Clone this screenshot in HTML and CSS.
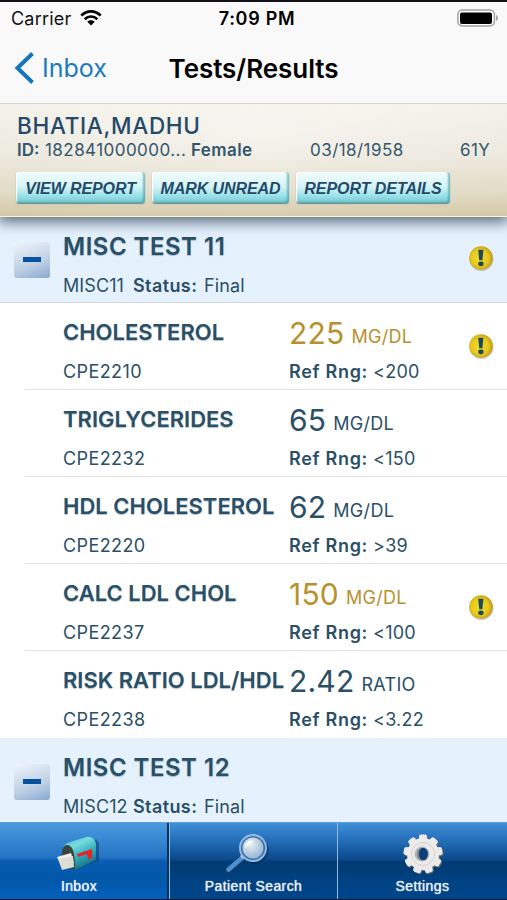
FILE: index.html
```html
<!DOCTYPE html>
<html lang="en">
<head>
    <meta charset="UTF-8">
    <meta name="viewport" content="width=device-width, initial-scale=1.0">
    <title>Tests/Results</title>
    <link rel="stylesheet" href="styles.css">
</head>
<body>
    <svg class="defs" width="0" height="0">
        <defs>
            <radialGradient id="gold" cx="45%" cy="50%" r="55%">
                <stop offset="0" stop-color="#f0dc2c"/>
                <stop offset="0.65" stop-color="#e8c81c"/>
                <stop offset="1" stop-color="#c39a18"/>
            </radialGradient>
            <symbol id="alert" viewBox="0 0 26 26">
                <circle cx="13.4" cy="14" r="12" fill="#8b8a80" opacity="0.45"/>
                <circle cx="13" cy="13" r="11.8" fill="url(#gold)"/>
                <path d="M10.2 4.8h5.2l-1 10.4h-3.2z" fill="#1b4a5c"/>
                <ellipse cx="12.9" cy="18.8" rx="2.7" ry="2.4" fill="#1b4a5c"/>
            </symbol>
        </defs>
    </svg>

    <div class="app">
        <div class="status-bar">
            <div class="carrier">
                <span>Carrier</span>
                <svg width="22" height="16" viewBox="0 0 22 16">
                    <path d="M1.3 5.6C6.9 0 15.1 0 20.7 5.6M4.7 9.2C8.4 5.6 13.6 5.6 17.3 9.2" fill="none" stroke="#000" stroke-width="2.7"/>
                    <path d="M7.3 11.8c2.2-2 5.2-2 7.4 0L11 15.5z" fill="#000"/>
                </svg>
            </div>
            <div class="time">7:09 PM</div>
            <svg class="battery" width="42" height="18" viewBox="0 0 42 18">
                <rect x="0.9" y="0.9" width="36.5" height="16" rx="4.5" fill="#fff" stroke="#a3a3a3" stroke-width="1.5"/>
                <rect x="3" y="3.5" width="32" height="11.5" rx="2" fill="#000"/>
                <path d="M39 6c2.6.8 2.6 5.2 0 6z" fill="#a3a3a3"/>
            </svg>
        </div>

        <div class="nav-bar">
            <div class="back">
                <svg width="21" height="34" viewBox="0 0 21 34">
                    <path d="M18.5 2.5L3.5 17l15 14.5" fill="none" stroke="#1375ba" stroke-width="4"/>
                </svg>
                <span>Inbox</span>
            </div>
            <div class="nav-title">Tests/Results</div>
        </div>

        <div class="patient">
            <div class="patient-name">BHATIA,MADHU</div>
            <div class="patient-info">
                <b class="id-label">ID:</b>
                <span class="id-value">182841000000...</span>
                <b class="gender">Female</b>
                <span class="dob">03/18/1958</span>
                <span class="age">61Y</span>
            </div>
            <div class="patient-buttons">
                <button class="view">VIEW REPORT</button>
                <button class="unread">MARK UNREAD</button>
                <button class="details">REPORT DETAILS</button>
            </div>
        </div>

        <div class="results">
            <div class="group first">
                <div class="toggle"></div>
                <div class="group-text">
                    <div class="group-title">MISC TEST 11</div>
                    <div class="group-sub"><span class="code-col">MISC11</span><b>Status:</b><span>Final</span></div>
                </div>
                <svg class="alert"><use href="#alert"/></svg>
            </div>

            <div class="test">
                <div class="test-name">
                    <div class="name">CHOLESTEROL</div>
                    <div class="code">CPE2210</div>
                </div>
                <div class="test-value abnormal">
                    <div class="value"><span class="number">225</span><span class="unit">MG/DL</span></div>
                    <div class="range"><b>Ref Rng:</b><span>&lt;200</span></div>
                </div>
                <svg class="alert"><use href="#alert"/></svg>
            </div>
            <div class="test">
                <div class="test-name">
                    <div class="name">TRIGLYCERIDES</div>
                    <div class="code">CPE2232</div>
                </div>
                <div class="test-value">
                    <div class="value"><span class="number">65</span><span class="unit">MG/DL</span></div>
                    <div class="range"><b>Ref Rng:</b><span>&lt;150</span></div>
                </div>
            </div>
            <div class="test">
                <div class="test-name">
                    <div class="name">HDL CHOLESTEROL</div>
                    <div class="code">CPE2220</div>
                </div>
                <div class="test-value">
                    <div class="value"><span class="number">62</span><span class="unit">MG/DL</span></div>
                    <div class="range"><b>Ref Rng:</b><span>&gt;39</span></div>
                </div>
            </div>
            <div class="test">
                <div class="test-name">
                    <div class="name">CALC LDL CHOL</div>
                    <div class="code">CPE2237</div>
                </div>
                <div class="test-value abnormal">
                    <div class="value"><span class="number">150</span><span class="unit">MG/DL</span></div>
                    <div class="range"><b>Ref Rng:</b><span>&lt;100</span></div>
                </div>
                <svg class="alert"><use href="#alert"/></svg>
            </div>
            <div class="test">
                <div class="test-name">
                    <div class="name">RISK RATIO LDL/HDL</div>
                    <div class="code">CPE2238</div>
                </div>
                <div class="test-value">
                    <div class="value"><span class="number">2.42</span><span class="unit">RATIO</span></div>
                    <div class="range"><b>Ref Rng:</b><span>&lt;3.22</span></div>
                </div>
            </div>

            <div class="group">
                <div class="toggle"></div>
                <div class="group-text">
                    <div class="group-title">MISC TEST 12</div>
                    <div class="group-sub"><span class="code-col">MISC12</span><b>Status:</b><span>Final</span></div>
                </div>
            </div>
        </div>

        <div class="tab-bar">
            <div class="tab active">
                <svg width="46" height="38" viewBox="0 0 46 38">
                    <defs>
                        <linearGradient id="box" x1="0" y1="0" x2="0.5" y2="1">
                            <stop offset="0" stop-color="#3eaebb"/>
                            <stop offset="0.35" stop-color="#76dde0"/>
                            <stop offset="0.7" stop-color="#2fa7b6"/>
                            <stop offset="1" stop-color="#15717f"/>
                        </linearGradient>
                    </defs>
                    <path d="M18 35L43 25V8l-3-4L20 31z" fill="#07316c" opacity="0.5"/>
                    <path d="M7 13C8 9 11 8 14 7L30 2c5-1 9 2 10 7v16L19 35z" fill="url(#box)"/>
                    <path d="M6 22C5 12 9 8 14 11c4 3 5 10 5 24l-5-2z" fill="#3a4642"/>
                    <path d="M1 22l14-4 3 10-11 6z" fill="#f2f0e9"/>
                    <path d="M2 24l15-3 1 11-12 3z" fill="#dedcd6"/>
                    <path d="M21 19l15-5v9l-4 1-1-5-9 3z" fill="#ec2028"/>
                </svg>
                <span>Inbox</span>
            </div>
            <div class="tab search">
                <svg width="46" height="42" viewBox="0 0 46 42">
                    <defs>
                        <radialGradient id="lens" cx="40%" cy="35%" r="75%">
                            <stop offset="0" stop-color="#eff4f8"/>
                            <stop offset="0.55" stop-color="#adc5dc"/>
                            <stop offset="1" stop-color="#7fa5cb"/>
                        </radialGradient>
                    </defs>
                    <circle cx="31" cy="17" r="13.5" fill="#052c5c" opacity="0.6"/>
                    <path d="M20 24L4 38" stroke="#153a66" stroke-width="6.5" stroke-linecap="round"/>
                    <path d="M19 24L4.5 36.5" stroke="#4c90d4" stroke-width="4.5" stroke-linecap="round"/>
                    <path d="M21 21L17.5 24.5" stroke="#c3d2df" stroke-width="4"/>
                    <circle cx="29" cy="15" r="13" fill="url(#lens)" stroke="#8fbbe6" stroke-width="2"/>
                    <circle cx="29" cy="15" r="11.3" fill="none" stroke="#3d6fa5" stroke-width="1.5"/>
                    <path d="M21 15c0-5 4-8 9-7-4 2-6 4-9 7z" fill="#fff"/>
                </svg>
                <span>Patient Search</span>
            </div>
            <div class="tab">
                <svg width="42" height="42" viewBox="-21 -21 42 42">
                    <defs>
                        <g id="teeth">
                            <rect x="-4" y="-19.5" width="8" height="19" rx="2"/>
                            <rect x="-4" y="-19.5" width="8" height="19" rx="2" transform="rotate(40)"/>
                            <rect x="-4" y="-19.5" width="8" height="19" rx="2" transform="rotate(80)"/>
                            <rect x="-4" y="-19.5" width="8" height="19" rx="2" transform="rotate(120)"/>
                            <rect x="-4" y="-19.5" width="8" height="19" rx="2" transform="rotate(160)"/>
                            <rect x="-4" y="-19.5" width="8" height="19" rx="2" transform="rotate(200)"/>
                            <rect x="-4" y="-19.5" width="8" height="19" rx="2" transform="rotate(240)"/>
                            <rect x="-4" y="-19.5" width="8" height="19" rx="2" transform="rotate(280)"/>
                            <rect x="-4" y="-19.5" width="8" height="19" rx="2" transform="rotate(320)"/>
                            <circle r="16"/>
                        </g>
                    </defs>
                    <use href="#teeth" x="1" y="1" fill="#6c7076"/>
                    <use href="#teeth" fill="#ecebea"/>
                    <circle r="11.5" fill="none" stroke="#d5d4d2" stroke-width="1"/>
                    <circle r="7.5" cx="-1" fill="#b5b7b9"/>
                    <ellipse cx="0" cy="0" rx="5" ry="6.3" fill="#0a3f78"/>
                    <path d="M-1-6.500c-4 3-4 10 0 13-7-1-7-12 0-13z" fill="#808488"/>
                </svg>
                <span>Settings</span>
            </div>
        </div>
    </div>
</body>
</html>
```

FILE: styles.css
```css
* {
    box-sizing: border-box;
}

body {
    margin: 0;
    font-family: Inter, "Liberation Sans", sans-serif;
    font-size: 18px;
    color: #2a4f66;
    background: #fff;
}

b {
    font-weight: 600;
}

.defs {
    position: absolute;
}

.app {
    display: flex;
    flex-direction: column;
    width: 507px;
    height: 900px;
    overflow: hidden;
    white-space: nowrap;
    border-top: 2px solid #141216;
    border-bottom: 1px solid #04152b;
}

/* status bar */
.status-bar {
    display: grid;
    grid-template-columns: 1fr auto 1fr;
    align-items: center;
    height: 32px;
    flex: none;
    padding: 0 8px 0 11px;
    background: #f9f9f9;
    color: #111;
}

.carrier {
    display: flex;
    align-items: center;
    gap: 9px;
    letter-spacing: 0.2px;
}

.time {
    padding-left: 4px;
    font-weight: 600;
    letter-spacing: 0.7px;
    color: #000;
}

.battery {
    justify-self: end;
}

/* navigation */
.nav-bar {
    display: grid;
    grid-template-columns: 1fr auto 1fr;
    align-items: center;
    height: 70px;
    flex: none;
    padding: 0 14px 1px;
    position: relative;
    z-index: 1;
    background: #f9f9f9;
    border-bottom: 1px solid #d5d5d3;
}

.back {
    display: flex;
    align-items: center;
    gap: 7px;
    font-size: 25px;
    color: #1c7bbd;
}

.nav-title {
    font-size: 26px;
    font-weight: 600;
    letter-spacing: -0.05px;
    color: #000;
}

/* patient header */
.patient {
    flex: none;
    height: 113px;
    padding: 8px 16px 0 17px;
    position: relative;
    background: radial-gradient(ellipse at 50% 30%, rgba(255, 255, 255, 0.25), rgba(190, 180, 145, 0.08)), linear-gradient(#f6f5ee, #eeebe1 45%, #e2dbc6 80%, #d5caa8);
    border-bottom: 1px solid #f8f3dc;
    box-shadow: 0 3px 13px 2px rgba(45, 60, 80, 0.75);
}

.patient-name {
    padding-top: 1px;
    font-size: 22.5px;
    font-weight: 500;
    letter-spacing: 0.7px;
    line-height: 25px;
    color: #24496a;
}

.patient-info {
    display: flex;
    font-size: 17px;
    line-height: 24px;
    letter-spacing: 0.45px;
    color: #34566d;
}

.id-label {
    width: 28px;
    letter-spacing: 0;
}

.id-value {
    width: 146px;
}

.gender {
    width: 119px;
    letter-spacing: 0.4px;
}

.dob {
    width: 150px;
}

.patient-buttons {
    display: flex;
    gap: 7px;
    margin: 10px 0 0 -1px;
}

.patient-buttons button {
    height: 31px;
    padding: 2px 0 0;
    font: italic bold 16px "Liberation Sans", Arial, sans-serif;
    color: #24496a;
    background: linear-gradient(#f1fcfc, #d8f5f6 45%, #9fe3e8 75%, #6fcad3);
    border: none;
    border-radius: 3px;
    box-shadow: inset -2px -1px 2px rgba(50, 150, 165, 0.6), inset 1px 1px 1px #fff, 0 1px 1px rgba(60, 80, 80, 0.6);
}

.patient-buttons .view {
    width: 129px;
    letter-spacing: -0.1px;
}

.patient-buttons .unread {
    width: 137px;
    letter-spacing: -0.1px;
}

.patient-buttons .details {
    width: 154px;
    letter-spacing: -0.05px;
}

/* result list */
.results {
    flex: 1;
    overflow: hidden;
}

.group {
    display: flex;
    height: 85px;
    padding: 0 13px 0 14px;
    background: #e5f2fe;
}

.group.first {
    height: 86px;
    border-bottom: 1px solid #d2d6da;
}

.toggle {
    width: 36px;
    height: 36px;
    margin: 26px 13px 0 0;
    border-radius: 3px;
    background: linear-gradient(#07529c, #07529c) 9px 15px / 18px 5px no-repeat, linear-gradient(160deg, #f0f5fa, #bfd0e5 60%, #87a9d0);
}

.first .toggle {
    margin-top: 25px;
}

.group-text {
    flex: 1;
}

.group-title {
    margin-top: 16px;
    font-size: 24px;
    font-weight: 600;
    line-height: 28px;
    letter-spacing: 0.5px;
    text-shadow: 0 1px 1px rgba(42, 79, 102, 0.35);
}

.group-sub {
    display: flex;
    margin-top: 13px;
    line-height: 24px;
    letter-spacing: 0.1px;
}

.code-col {
    width: 70px;
}

.group-sub b {
    width: 71px;
    letter-spacing: 0.4px;
}

.alert {
    width: 26px;
    height: 26px;
    margin-top: 28px;
}

.test {
    display: flex;
    height: 87px;
    margin-left: 25px;
    padding: 0 13px 0 38px;
    border-bottom: 1px solid #dfe1e3;
    background: #fff;
}

.test:nth-last-child(2) {
    border-bottom: none;
}

.test .alert {
    margin-top: 30px;
}

.test-name {
    width: 226px;
}

.test-value {
    flex: 1;
}

.name {
    margin-top: 16px;
    font-size: 22px;
    font-weight: 600;
    line-height: 26px;
    text-shadow: 0 1px 1px rgba(42, 79, 102, 0.35);
}

.code {
    margin-top: 15px;
    line-height: 24px;
    letter-spacing: 0.4px;
}

.value {
    display: flex;
    align-items: baseline;
    height: 36px;
    margin-top: 12px;
    gap: 7px;
    line-height: 36px;
}

.number {
    font-size: 30px;
    letter-spacing: 0.2px;
}

.unit {
    padding-bottom: 1px;
    letter-spacing: 0.3px;
    transform: translateY(-1px);
}

.abnormal .value {
    color: #b8902c;
}

.range {
    display: flex;
    margin-top: 9px;
    line-height: 24px;
    letter-spacing: 0.25px;
}

.range b {
    width: 84px;
    letter-spacing: 0.7px;
}

/* tab bar */
.tab-bar {
    display: grid;
    grid-template-columns: 169px 168px 170px;
    flex: none;
    height: 77px;
    border-top: 1px solid #5d9fd8;
}

.tab {
    display: flex;
    flex-direction: column;
    align-items: center;
    justify-content: flex-end;
    padding-bottom: 5px;
    font-family: "Liberation Sans", Arial, sans-serif;
    font-size: 14px;
    line-height: 16px;
    color: #e9f1fa;
    letter-spacing: 0.4px;
    text-shadow: 0 0 1px #fff;
    background: linear-gradient(#3f8fd9, #1c64ae 30%, #0a4788 49%, #003a70 51%, #004282 75%, #00468b);
    border-left: 1px solid #8fb9de;
}

.tab svg {
    margin-bottom: 3px;
}

.tab.search svg {
    margin-right: 13px;
}

.tab.active {
    padding-right: 9px;
    background: linear-gradient(#4a9ae0, #2373c3 45%, #0a5cb0 50%, #0257a8 75%, #0561bd);
    border-left: none;
    border-right: 2px solid #06305f;
}

.tab.active svg {
    margin-bottom: 5px;
}
```
